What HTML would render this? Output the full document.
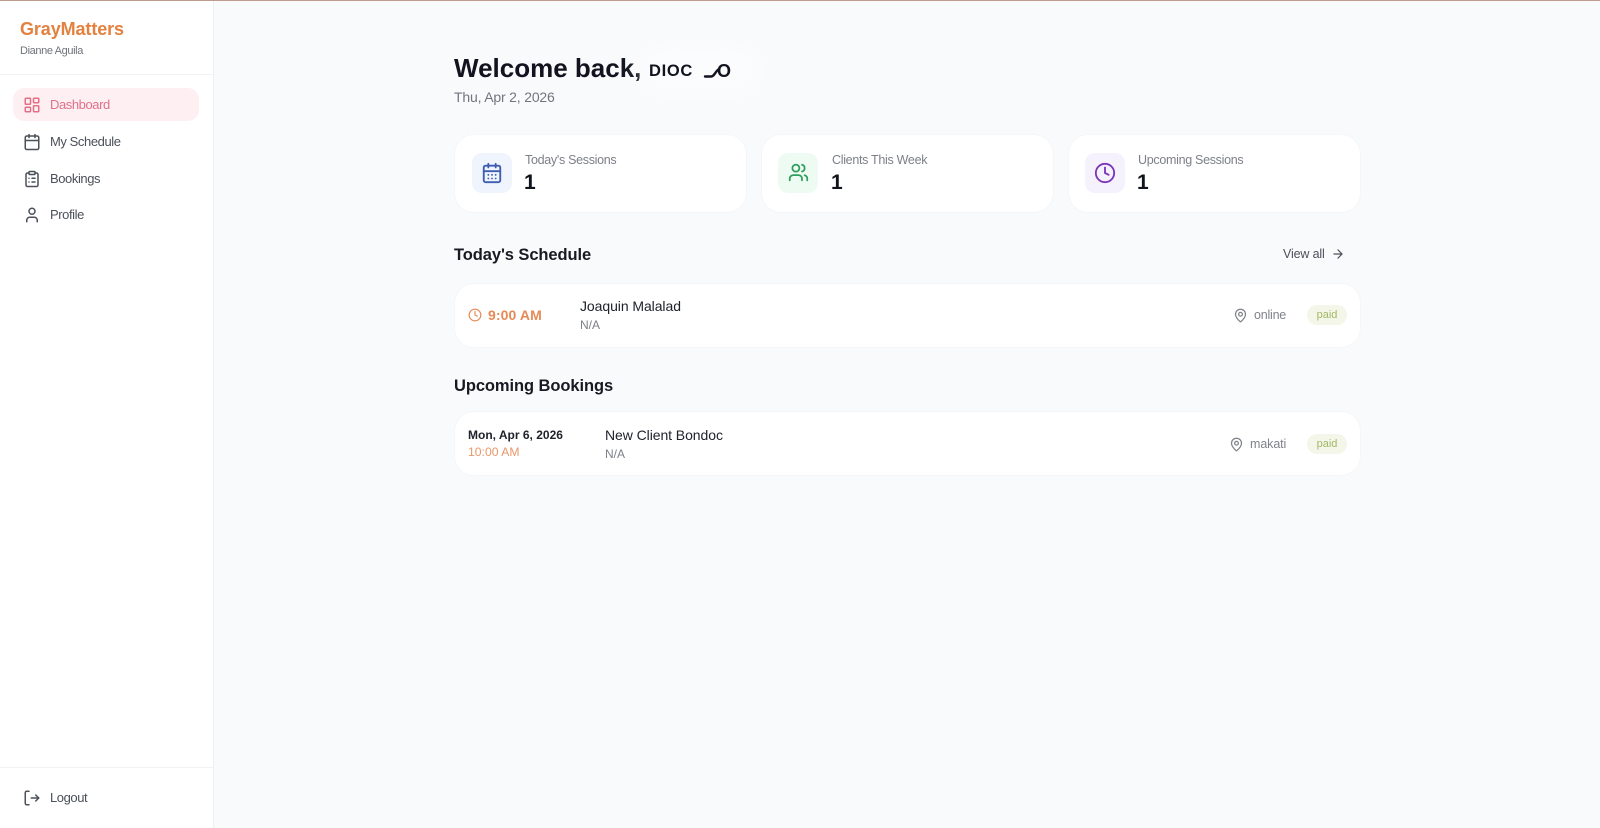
<!DOCTYPE html>
<html lang="en">
<head>
<meta charset="utf-8">
<title>GrayMatters</title>
<style>
*{box-sizing:border-box}
html,body{margin:0;padding:0;width:1600px;height:828px;overflow:hidden;background:#f9fafc;font-family:"Liberation Sans",sans-serif}
.t{position:absolute;white-space:nowrap;line-height:20px;height:20px}
.a{position:absolute}
svg{position:absolute;fill:none;stroke:currentColor;stroke-width:2;stroke-linecap:round;stroke-linejoin:round}
.card{position:absolute;background:#fff;border:1px solid #f5f6f8;border-radius:20px}
.ib{position:absolute;width:40px;height:40px;border-radius:10px;top:153px}
.lab{font-size:12.5px;color:#7d8088;letter-spacing:-.3px}
.val{font-size:21px;font-weight:bold;color:#11141c}
.nav{font-size:13px;color:#4b5059;letter-spacing:-.42px}
.h2{font-size:16.5px;font-weight:bold;color:#171a22;letter-spacing:-.08px}
.name{font-size:14px;color:#20232b;letter-spacing:-.07px}
.na{font-size:12px;color:#7d8088}
.loc{font-size:12.5px;color:#808389;letter-spacing:-.22px}
.badge{position:absolute;left:1307px;width:40px;height:20px;border-radius:10px;background:#f3f6e8;color:#a3b866;font-size:11px;line-height:20px;text-align:center}
</style>
</head>
<body>
<div class="a" style="left:0;top:0;width:1600px;height:1px;background:#bf9a90"></div>
<div class="a" style="left:0;top:1px;width:214px;height:827px;background:#fff;border-right:1px solid #eff0f3"></div>
<div class="a" style="left:0;top:74px;width:213px;height:1px;background:#f1f2f4"></div>
<div class="a" style="left:0;top:767px;width:213px;height:1px;background:#f1f2f4"></div>

<div class="t" style="left:20px;top:19px;font-size:18px;font-weight:bold;color:#e4813f;letter-spacing:-.1px">GrayMatters</div>
<div class="t" style="left:20px;top:41px;font-size:11px;color:#6f737b;letter-spacing:-.38px">Dianne Aguila</div>

<div class="a" style="left:13px;top:88px;width:186px;height:33px;border-radius:11px;background:#fef0f2"></div>
<svg style="left:23px;top:96px;color:#e46f84" width="18" height="18" viewBox="0 0 24 24"><rect x="3" y="3" width="7" height="8" rx="1"/><rect x="14" y="3" width="7" height="6" rx="1"/><rect x="14" y="13" width="7" height="8" rx="1"/><rect x="3" y="15" width="7" height="6" rx="1"/></svg>
<div class="t nav" style="left:50px;top:95px;color:#e0708a">Dashboard</div>

<svg style="left:23px;top:133px;color:#4b5059" width="18" height="18" viewBox="0 0 24 24"><path d="M8 2v4M16 2v4"/><rect x="3" y="4" width="18" height="18" rx="2"/><path d="M3 10h18"/></svg>
<div class="t nav" style="left:50px;top:132px">My Schedule</div>

<svg style="left:23px;top:170px;color:#4b5059" width="18" height="18" viewBox="0 0 24 24"><rect x="8" y="2" width="8" height="4" rx="1"/><path d="M16 4h2a2 2 0 0 1 2 2v14a2 2 0 0 1-2 2H6a2 2 0 0 1-2-2V6a2 2 0 0 1 2-2h2"/><path d="M12 11h4M12 16h4M8 11h.01M8 16h.01"/></svg>
<div class="t nav" style="left:50px;top:169px">Bookings</div>

<svg style="left:23px;top:206px;color:#4b5059" width="18" height="18" viewBox="0 0 24 24"><path d="M19 21v-2a4 4 0 0 0-4-4H9a4 4 0 0 0-4 4v2"/><circle cx="12" cy="7" r="4"/></svg>
<div class="t nav" style="left:50px;top:205px">Profile</div>

<svg style="left:23px;top:789px;color:#4b5059" width="18" height="18" viewBox="0 0 24 24"><path d="M8 21H5a2 2 0 0 1-2-2V5a2 2 0 0 1 2-2h3"/><path d="M17 16l4-4-4-4"/><path d="M21 12H11"/></svg>
<div class="t nav" style="left:50px;top:788px">Logout</div>

<div class="t" style="left:454px;top:53px;height:30px;line-height:30px;font-size:26px;font-weight:bold;color:#11141f">Welcome back,</div>
<div class="a" style="left:640px;top:45px;width:120px;height:50px;border-radius:25px;background:#fff;opacity:.4;filter:blur(10px)"></div>
<div class="t" style="left:649px;top:61px;height:20px;line-height:20px;font-size:16.5px;font-weight:bold;color:#11141f;letter-spacing:.7px">DIOC</div>
<div class="t" style="left:717px;top:61px;height:20px;line-height:20px;font-size:18px;font-weight:bold;color:#11141f">O</div>
<svg style="left:700px;top:62px;color:#11141f;stroke-width:2.4" width="24" height="18" viewBox="0 0 24 18"><path d="M5 14.5h6c3.5 0 4-5 8-7.5"/></svg>
<div class="t" style="left:454px;top:87px;font-size:14px;color:#71757d;letter-spacing:-.18px">Thu, Apr 2, 2026</div>

<div class="card" style="left:454px;top:134px;width:293px;height:79px"></div>
<div class="card" style="left:761px;top:134px;width:293px;height:79px"></div>
<div class="card" style="left:1068px;top:134px;width:293px;height:79px"></div>

<div class="ib" style="left:472px;background:#eff4fd"></div>
<svg style="left:481px;top:162px;color:#3f5db0" width="22" height="22" viewBox="0 0 24 24"><path d="M8 2v4M16 2v4"/><rect x="3" y="4" width="18" height="18" rx="2"/><path d="M3 10h18M8 14h.01M12 14h.01M16 14h.01M8 18h.01M12 18h.01M16 18h.01"/></svg>
<div class="t lab" style="left:525px;top:150px">Today's Sessions</div>
<div class="t val" style="left:524px;top:173px">1</div>

<div class="ib" style="left:778px;background:#eefbf3"></div>
<svg style="left:788px;top:162px;color:#2f9e5c" width="21" height="21" viewBox="0 0 24 24"><path d="M16 21v-2a4 4 0 0 0-4-4H6a4 4 0 0 0-4 4v2"/><circle cx="9" cy="7" r="4"/><path d="M22 21v-2a4 4 0 0 0-3-3.87"/><path d="M16 3.13a4 4 0 0 1 0 7.75"/></svg>
<div class="t lab" style="left:832px;top:150px">Clients This Week</div>
<div class="t val" style="left:831px;top:173px">1</div>

<div class="ib" style="left:1085px;background:#f6f2fd"></div>
<svg style="left:1094px;top:162px;color:#7b35b8" width="22" height="22" viewBox="0 0 24 24"><circle cx="12" cy="12" r="10"/><path d="M12 6v6l4 2"/></svg>
<div class="t lab" style="left:1138px;top:150px">Upcoming Sessions</div>
<div class="t val" style="left:1137px;top:173px">1</div>

<div class="t h2" style="left:454px;top:245px">Today's Schedule</div>
<div class="t" style="left:1283px;top:244px;font-size:12.5px;color:#4b5059;letter-spacing:-.15px">View all</div>
<svg style="left:1331px;top:247px;color:#4b5059" width="14" height="14" viewBox="0 0 24 24"><path d="M5 12h14M12 5l7 7-7 7"/></svg>

<div class="card" style="left:454px;top:283px;width:907px;height:65px"></div>
<svg style="left:468px;top:308px;color:#e58a55" width="14" height="14" viewBox="0 0 24 24"><circle cx="12" cy="12" r="10"/><path d="M12 6v6l4 2"/></svg>
<div class="t" style="left:488px;top:305px;font-size:14px;font-weight:bold;color:#e58a55;letter-spacing:.1px">9:00 AM</div>
<div class="t name" style="left:580px;top:296px">Joaquin Malalad</div>
<div class="t na" style="left:580px;top:315px">N/A</div>
<svg style="left:1233px;top:308px;color:#808389" width="15" height="15" viewBox="0 0 24 24"><path d="M20 10c0 4.993-5.539 10.193-7.399 11.799a1 1 0 0 1-1.202 0C9.539 20.193 4 14.993 4 10a8 8 0 0 1 16 0"/><circle cx="12" cy="10" r="3"/></svg>
<div class="t loc" style="left:1254px;top:305px">online</div>
<div class="badge" style="top:305px">paid</div>

<div class="t h2" style="left:454px;top:376px">Upcoming Bookings</div>

<div class="card" style="left:454px;top:411px;width:907px;height:65px"></div>
<div class="t" style="left:468px;top:425px;font-size:12px;font-weight:bold;color:#20232b">Mon, Apr 6, 2026</div>
<div class="t" style="left:468px;top:442px;font-size:12.2px;color:#e8986a">10:00 AM</div>
<div class="t name" style="left:605px;top:425px">New Client Bondoc</div>
<div class="t na" style="left:605px;top:444px">N/A</div>
<svg style="left:1229px;top:437px;color:#808389" width="15" height="15" viewBox="0 0 24 24"><path d="M20 10c0 4.993-5.539 10.193-7.399 11.799a1 1 0 0 1-1.202 0C9.539 20.193 4 14.993 4 10a8 8 0 0 1 16 0"/><circle cx="12" cy="10" r="3"/></svg>
<div class="t loc" style="left:1250px;top:434px;letter-spacing:-.1px">makati</div>
<div class="badge" style="top:434px">paid</div>
</body>
</html>
